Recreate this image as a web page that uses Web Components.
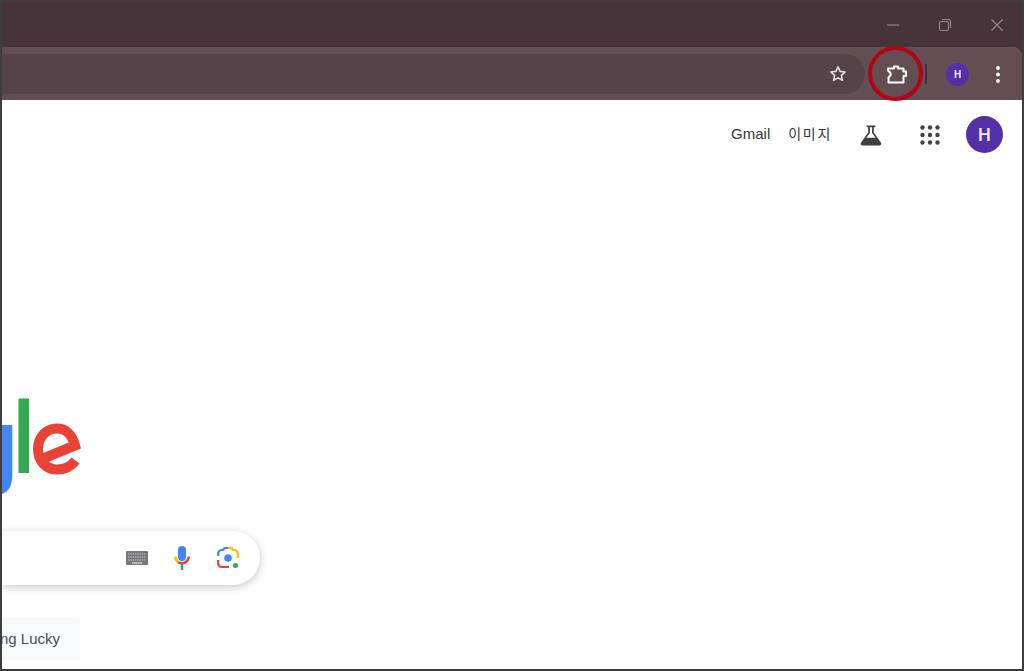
<!DOCTYPE html>
<html lang="ko">
<head>
<meta charset="utf-8">
<title>Google</title>
<style>
  html, body { margin: 0; height: 100%; overflow: hidden; background: #fff; }
  body { font-family: "Liberation Sans", Arial, sans-serif; }
</style>
</head>
<body>
<browser-window>
  <title-bar slot="title"></title-bar>
  <browser-toolbar slot="toolbar"></browser-toolbar>
  <page-header slot="page"></page-header>
  <search-hero slot="page"></search-hero>
</browser-window>

<script>
class BrowserWindow extends HTMLElement {
  constructor() {
    super();
    this.attachShadow({ mode: "open" });
    this.shadowRoot.innerHTML = `
      <style>
        :host {
          display: flex;
          flex-direction: column;
          box-sizing: border-box;
          width: 1024px;
          height: 671px;
          border: 2px solid #3d3d3f;
          overflow: hidden;
          background: #45343a;
        }
        .page {
          flex: 1;
          display: flex;
          flex-direction: column;
          min-height: 0;
          overflow: hidden;
          background: #fff;
        }
      </style>
      <slot name="title"></slot>
      <slot name="toolbar"></slot>
      <div class="page"><slot name="page"></slot></div>
    `;
  }
}

class TitleBar extends HTMLElement {
  constructor() {
    super();
    this.attachShadow({ mode: "open" });
    this.shadowRoot.innerHTML = `
      <style>
        :host {
          display: flex;
          justify-content: flex-end;
          align-items: center;
          gap: 2px;
          height: 45px;
          background: #45343a;
        }
        button {
          all: unset;
          display: flex;
          align-items: center;
          justify-content: center;
          width: 50px;
          height: 45px;
          color: #8f8589;
        }
        svg { width: 14px; height: 14px; fill: none; stroke: currentColor; stroke-width: 1.2; }
      </style>
      <button aria-label="minimize"><svg viewBox="0 0 14 14"><path d="M1 7h12"/></svg></button>
      <button aria-label="restore"><svg viewBox="0 0 14 14"><rect x="1.5" y="3.5" width="9" height="9" rx="1.5"/><path d="M4 1.500h6.500a2 2 0 0 1 2 2V10"/></svg></button>
      <button aria-label="close"><svg viewBox="0 0 14 14"><path d="M1.500 1.500l11 11M12.500 1.500l-11 11"/></svg></button>
    `;
  }
}

class BrowserToolbar extends HTMLElement {
  constructor() {
    super();
    this.attachShadow({ mode: "open" });
    this.shadowRoot.innerHTML = `
      <style>
        :host {
          display: flex;
          align-items: center;
          position: relative;
          height: 53px;
          box-sizing: border-box;
          padding: 1px 22px 0 0;
          background: #634e54;
          border-top-right-radius: 9px;
          color: #f1e9eb;
        }
        .omnibox {
          flex: 1;
          display: flex;
          justify-content: flex-end;
          align-items: center;
          height: 40px;
          padding-right: 18px;
          margin-right: 21px;
          background: #534449;
          border-radius: 0 20px 20px 0;
        }
        svg { display: block; }
        .puzzle { width: 22px; height: 22px; fill: none; stroke: #fff; stroke-width: 2; stroke-linejoin: round; }
        .sep { width: 2px; height: 20px; background: #3f3238; margin: 0 19px 0 17px; }
        .avatar {
          width: 23px;
          height: 23px;
          border-radius: 50%;
          background: #5430a6;
          color: #f2e9fb;
          font: bold 10px "Liberation Sans", Arial, sans-serif;
          display: flex;
          align-items: center;
          justify-content: center;
        }
        .menu { margin-left: 27px; width: 4px; height: 17px; fill: #fff; }
        .ring {
          position: absolute;
          left: 866px;
          top: -1px;
          width: 55px;
          height: 55px;
          box-sizing: border-box;
          border: 4px solid #b00612;
          border-radius: 50%;
        }
      </style>
      <div class="omnibox">
        <svg width="18" height="18" viewBox="0 0 18 18" fill="none" stroke="#e6dde0" stroke-width="1.6" stroke-linejoin="round" aria-label="bookmark"><path d="M9 1.800l2.100 4.600 5 .6-3.700 3.400 1 4.900L9 12.900l-4.400 2.400 1-4.900L1.900 7l5-.6z"/></svg>
      </div>
      <svg class="puzzle" viewBox="0 0 22 22" aria-label="extensions"><path d="M2 5.500H8V3.500H12V5.500H17.500V8.500H20V13H17.500V19.500H2.500V14.500L4.500 12.500V10L2 7.500Z"/></svg>
      <span class="sep"></span>
      <span class="avatar">H</span>
      <svg class="menu" viewBox="0 0 4 17" aria-label="menu"><circle cx="2" cy="2" r="1.900"/><circle cx="2" cy="8.500" r="1.900"/><circle cx="2" cy="15" r="1.900"/></svg>
      <span class="ring"></span>
    `;
  }
}

class PageHeader extends HTMLElement {
  constructor() {
    super();
    this.attachShadow({ mode: "open" });
    this.shadowRoot.innerHTML = `
      <style>
        :host {
          display: flex;
          justify-content: flex-end;
          align-items: center;
          height: 69px;
          padding: 0 19px 0 0;
          color: #333;
          font: 15px "Liberation Sans", Arial, sans-serif;
        }
        .gmail { position: relative; top: -1px; }
        .ko {
          margin-left: 18px;
          font: 14px "Noto Sans CJK KR", sans-serif;
          letter-spacing: 1.700px;
          position: relative;
          top: -2px;
        }
        .flask { margin-left: 28px; }
        .apps { margin-left: 38px; }
        .avatar {
          margin-left: 26px;
          width: 37px;
          height: 37px;
          border-radius: 50%;
          background: #5430a6;
          color: #f3ecfb;
          font: 500 18px Roboto, sans-serif;
          display: flex;
          align-items: center;
          justify-content: center;
        }
        svg { display: block; }
      </style>
      <span class="gmail">Gmail</span>
      <span class="ko">이미지</span>
      <svg class="flask" width="22" height="22" viewBox="0 0 23 22" aria-label="labs">
        <path d="M7 1h9v1.800h-1.600v5.600L22 19a2 2 0 0 1-1.700 3H2.700A2 2 0 0 1 1 19L8.600 8.400V2.800H7z" fill="#3f3f3f"/>
        <path d="M10.400 2.800v6.200L6.600 14h9.800l-3.800-5V2.800z" fill="#fff"/>
      </svg>
      <svg class="apps" width="20" height="20" viewBox="0 0 20 20" fill="#444" aria-label="apps">
        <circle cx="2.500" cy="2.500" r="2.200"/><circle cx="10" cy="2.500" r="2.200"/><circle cx="17.500" cy="2.500" r="2.200"/>
        <circle cx="2.500" cy="10" r="2.200"/><circle cx="10" cy="10" r="2.200"/><circle cx="17.500" cy="10" r="2.200"/>
        <circle cx="2.500" cy="17.500" r="2.200"/><circle cx="10" cy="17.500" r="2.200"/><circle cx="17.500" cy="17.500" r="2.200"/>
      </svg>
      <span class="avatar">H</span>
    `;
  }
}

class SearchHero extends HTMLElement {
  constructor() {
    super();
    this.attachShadow({ mode: "open" });
    this.shadowRoot.innerHTML = `
      <style>
        :host {
          display: flex;
          flex-direction: column;
          align-items: flex-end;
          width: 258px;
          padding-top: 229px;
        }
        .logo { display: block; align-self: flex-start; }
        .search {
          display: flex;
          align-items: center;
          justify-content: flex-end;
          box-sizing: border-box;
          width: 100%;
          height: 54px;
          margin-top: 37px;
          padding-right: 21px;
          background: #fff;
          border-radius: 0 27px 27px 0;
          box-shadow: 0 2px 8px rgba(32, 33, 36, .26);
        }
        .mic { margin: 0 27px 0 26px; }
        .lucky-row {
          align-self: flex-start;
          width: 78px;
          height: 42px;
          margin-top: 33px;
          background: #f8f9fa;
          border-radius: 0 4px 4px 0;
          display: flex;
          justify-content: flex-end;
          align-items: center;
          padding-right: 20px;
          box-sizing: border-box;
          color: #4a4d52;
          font: 15px "Liberation Sans", Arial, sans-serif;
          white-space: nowrap;
        }
        .lucky-row span { position: relative; top: -1px; }
        svg { display: block; flex: none; }
      </style>
      <svg class="logo" width="80" height="96" viewBox="2 398 80 96" fill="none" aria-label="Google logo">
        <path d="M7 425v50c0 9-3 13-7 14" stroke="#4285f4" stroke-width="10.500"/>
        <rect x="18.500" y="398.500" width="10.500" height="74.500" fill="#34a853"/>
        <path d="M42 459L75 445.500C72 434 65 428.500 57 428.500 46 428.500 38 437.500 38 449 38 461 46 469.500 57 469.500 65 469.500 71.500 466 75.500 460.500" stroke="#ea4335" stroke-width="10"/>
      </svg>
      <div class="search">
        <svg width="22" height="14" viewBox="0 0 22 14" aria-label="keyboard">
          <rect width="22" height="14" rx="1" fill="#75777a"/>
          <path d="M2 3h18M2 6h18M2 9h18" stroke="#c9cacc" stroke-width="1" stroke-dasharray="1.400 .9"/>
          <path d="M6 12h10" stroke="#c9cacc" stroke-width="1.500"/>
        </svg>
        <svg class="mic" width="16" height="24" viewBox="0 0 16 24" fill="none" aria-label="voice search">
          <rect x="4" y="0" width="8" height="15" rx="4" fill="#4285f4"/>
          <path d="M1.300 10.500A6.800 6.800 0 0 0 4 16" stroke="#fbbc04" stroke-width="2.600"/>
          <path d="M4 16a6.800 6.800 0 0 0 4 1.300 6.800 6.800 0 0 0 6.700-6.800" stroke="#ea4335" stroke-width="2.600"/>
          <path d="M8 18V24" stroke="#34a853" stroke-width="2.400"/>
        </svg>
        <svg width="22" height="22" viewBox="0 0 22 22" fill="none" stroke-width="2.200" aria-label="image search">
          <path d="M1.200 9V6.500a3.500 3.500 0 0 1 3.500-3.500H6L7.500 1H11" stroke="#4285f4"/>
          <path d="M11 1h3.500L16 3h1.300a3.500 3.500 0 0 1 3.500 3.500V11" stroke="#fbbc04"/>
          <path d="M1.200 13v3.500a3.500 3.500 0 0 0 3.500 3.500H12" stroke="#ea4335"/>
          <circle cx="11" cy="11" r="3.800" fill="#4285f4" stroke="none"/>
          <circle cx="18.500" cy="18.500" r="2.500" fill="#34a853" stroke="none"/>
        </svg>
      </div>
      <div class="lucky-row"><span>ng Lucky</span></div>
    `;
  }
}

customElements.define("browser-window", BrowserWindow);
customElements.define("title-bar", TitleBar);
customElements.define("browser-toolbar", BrowserToolbar);
customElements.define("page-header", PageHeader);
customElements.define("search-hero", SearchHero);
</script>
</body>
</html>
